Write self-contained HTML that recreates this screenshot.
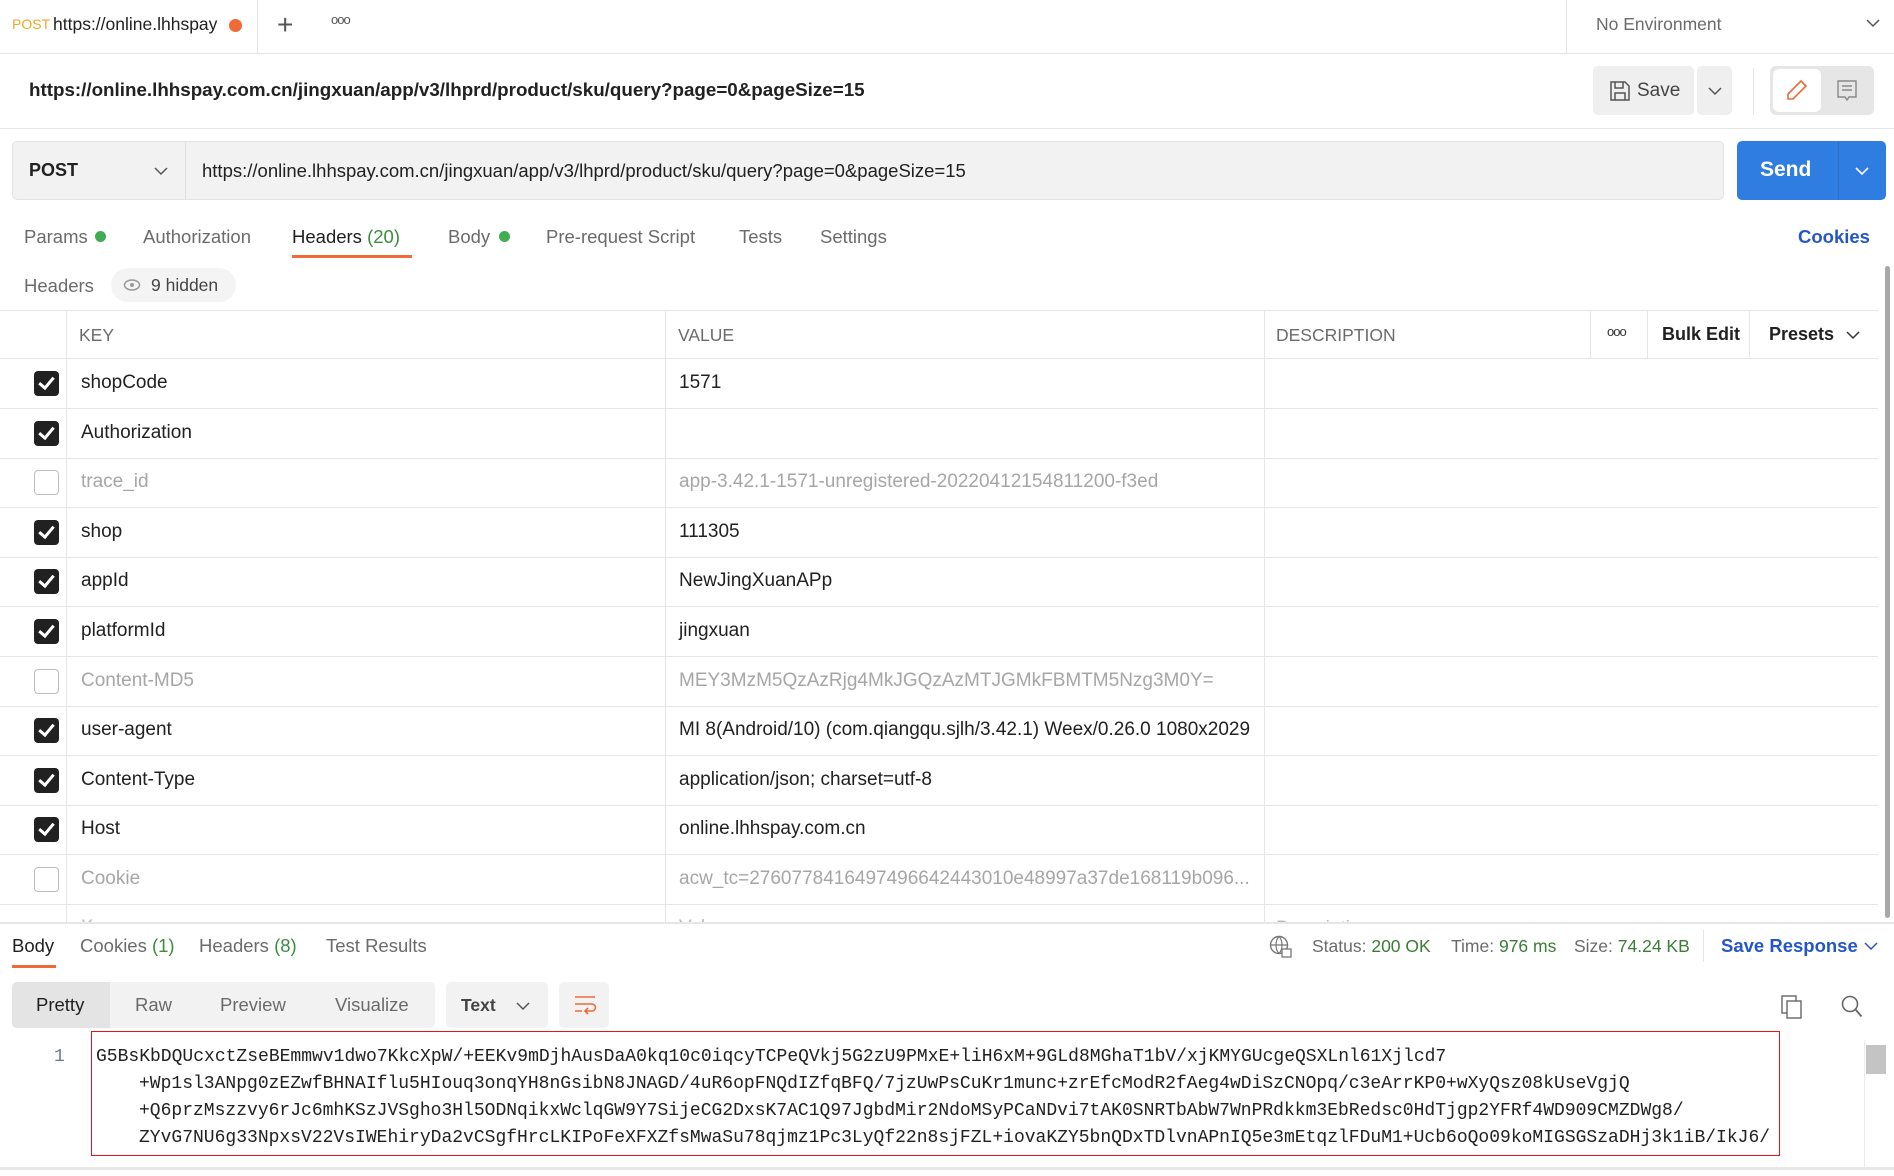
<!DOCTYPE html>
<html><head><meta charset="utf-8"><style>
*{box-sizing:border-box;margin:0;padding:0}
body{width:1894px;height:1176px;overflow:hidden;background:#fff;font-family:"Liberation Sans",sans-serif;color:#212121;position:relative}
.a{position:absolute;white-space:nowrap}
.g{color:#6b6b6b}
.hl{position:absolute;background:#e6e6e6;height:1px}
.vl{position:absolute;background:#e6e6e6;width:1px}
.cb{position:absolute;left:34px;width:25px;height:25px;border-radius:4px;background:#212121}
.cb::after{content:"";position:absolute;left:8px;top:3px;width:6px;height:12px;border:solid #fff;border-width:0 3px 3px 0;transform:rotate(40deg)}
.cb.off{background:#fff;border:1.5px solid #bdbdbd}
.cb.off::after{display:none}
.row{position:absolute;left:0;width:1878px;height:50px;border-bottom:1px solid #e6e6e6;font-size:19px}
.row .k{position:absolute;left:81px;top:13px}
.row .v{position:absolute;left:679px;top:13px}
.row.dis{color:#a6a6a6}
.mono{font-family:"Liberation Mono",monospace;font-size:18px;color:#212121}
.t{font-size:18.5px}
</style></head><body>

<div class="a" style="left:12px;top:16px;font-size:14px;color:#f5a623">POST</div>
<div class="a" style="left:53px;top:14px;font-size:17.5px">https://online.lhhspay</div>
<div class="a" style="left:229px;top:19px;width:13px;height:13px;border-radius:50%;background:#ee6a37"></div>
<div class="vl" style="left:257px;top:0;height:53px"></div>
<div class="a" style="left:277px;top:9px;font-size:28px;font-weight:300;color:#555">+</div>
<div class="a" style="left:331px;top:12px;font-size:13px;color:#555;letter-spacing:-1px">ooo</div>
<div class="vl" style="left:1566px;top:0;height:53px"></div>
<div class="a g" style="left:1596px;top:14px;font-size:17.5px">No Environment</div>
<svg class="a" style="left:1866px;top:18px" width="14" height="10"><path d="M1 2l6 6 6-6" fill="none" stroke="#555" stroke-width="1.5"/></svg>
<div class="hl" style="left:0;top:53px;width:1894px"></div>

<div class="a" style="left:29px;top:79px;font-size:18.8px;font-weight:bold">https://online.lhhspay.com.cn/jingxuan/app/v3/lhprd/product/sku/query?page=0&amp;pageSize=15</div>
<div class="a" style="left:1593px;top:66px;width:101px;height:49px;background:#efefef;border-radius:5px"></div>
<svg class="a" style="left:1609px;top:80px" width="22" height="22"><path d="M2 2h14l4 4v14H2z M6 2v6h8V2 M6 20v-7h10v7" fill="none" stroke="#555" stroke-width="1.5"/></svg>
<div class="a" style="left:1637px;top:80px;font-size:19px;color:#444">Save</div>
<div class="a" style="left:1697px;top:66px;width:35px;height:49px;background:#efefef;border-radius:5px"></div>
<svg class="a" style="left:1708px;top:86px" width="14" height="10"><path d="M1 2l6 6 6-6" fill="none" stroke="#555" stroke-width="1.5"/></svg>
<div class="vl" style="left:1753px;top:68px;height:47px"></div>
<div class="a" style="left:1770px;top:66px;width:104px;height:49px;background:#e6e6e6;border-radius:6px"></div>
<div class="a" style="left:1773px;top:69px;width:48px;height:43px;background:#fff;border-radius:6px"></div>
<svg class="a" style="left:1785px;top:78px" width="24" height="24"><path d="M16 3l5 5L8 21H3v-5z" fill="none" stroke="#ee6a37" stroke-width="1.6"/></svg>
<svg class="a" style="left:1836px;top:79px" width="22" height="24"><path d="M2 2h18v16h-7l-2 3-2-3H2z M6 7h10M6 11h10" fill="none" stroke="#888" stroke-width="1.4"/></svg>
<div class="hl" style="left:0;top:128px;width:1894px"></div>

<div class="a" style="left:12px;top:141px;width:1712px;height:59px;background:#f2f2f2;border:1px solid #e3e3e3;border-radius:5px"></div>
<div class="vl" style="left:185px;top:142px;height:57px;background:#e0e0e0"></div>
<div class="a" style="left:29px;top:160px;font-size:18px;font-weight:bold">POST</div>
<svg class="a" style="left:154px;top:166px" width="14" height="10"><path d="M1 2l6 6 6-6" fill="none" stroke="#555" stroke-width="1.5"/></svg>
<div class="a" style="left:202px;top:160px;font-size:18.5px">https://online.lhhspay.com.cn/jingxuan/app/v3/lhprd/product/sku/query?page=0&amp;pageSize=15</div>
<div class="a" style="left:1737px;top:141px;width:149px;height:59px;background:#2f7de1;border-radius:5px"></div>
<div class="vl" style="left:1838px;top:141px;height:59px;background:#2a6fc8"></div>
<div class="a" style="left:1760px;top:158px;font-size:21px;font-weight:bold;color:#fff">Send</div>
<svg class="a" style="left:1855px;top:166px" width="14" height="10"><path d="M1 2l6 6 6-6" fill="none" stroke="#fff" stroke-width="1.6"/></svg>

<div class="a g t" style="left:24px;top:226px">Params</div>
<div class="a" style="left:95px;top:231px;width:11px;height:11px;border-radius:50%;background:#3fae52"></div>
<div class="a g t" style="left:143px;top:226px">Authorization</div>
<div class="a t" style="left:292px;top:226px">Headers <span style="color:#3c8c3c">(20)</span></div>
<div class="a" style="left:292px;top:255px;width:120px;height:3px;background:#ee6a37"></div>
<div class="a g t" style="left:448px;top:226px">Body</div>
<div class="a" style="left:499px;top:231px;width:11px;height:11px;border-radius:50%;background:#3fae52"></div>
<div class="a g t" style="left:546px;top:226px">Pre-request Script</div>
<div class="a g t" style="left:739px;top:226px">Tests</div>
<div class="a g t" style="left:820px;top:226px">Settings</div>
<div class="a" style="left:1798px;top:226px;font-size:18.5px;font-weight:bold;color:#2556c9">Cookies</div>

<div class="a g t" style="left:24px;top:275px">Headers</div>
<div class="a" style="left:111px;top:268px;width:125px;height:34px;background:#f4f4f4;border-radius:17px"></div>
<svg class="a" style="left:123px;top:278px" width="18" height="14"><ellipse cx="9" cy="7" rx="7.5" ry="5" fill="none" stroke="#999" stroke-width="1.5"/><circle cx="9" cy="7" r="2" fill="#999"/></svg>
<div class="a" style="left:151px;top:275px;font-size:17.5px;color:#444">9 hidden</div>

<div class="a" style="left:0;top:310px;width:1878px;height:612px;overflow:hidden">
 <div class="hl" style="left:0;top:0;width:1878px"></div>
 <div class="a" style="left:0;top:0;width:1878px;height:49px;border-bottom:1px solid #e6e6e6"></div>
 <div class="a g" style="left:79px;top:15px;font-size:17.5px">KEY</div>
 <div class="a g" style="left:678px;top:15px;font-size:17.5px">VALUE</div>
 <div class="a g" style="left:1276px;top:15px;font-size:17.5px">DESCRIPTION</div>
 <div class="a" style="left:1607px;top:14px;font-size:13px;color:#333;letter-spacing:-1px">ooo</div>
 <div class="a" style="left:1662px;top:14px;font-size:18px;font-weight:bold">Bulk Edit</div>
 <div class="a" style="left:1769px;top:14px;font-size:18px;font-weight:bold">Presets</div>
 <svg class="a" style="left:1846px;top:20px" width="14" height="10"><path d="M1 2l6 6 6-6" fill="none" stroke="#333" stroke-width="1.5"/></svg>
 <div class="vl" style="left:1590px;top:0;height:49px"></div>
 <div class="vl" style="left:1647px;top:0;height:49px"></div>
 <div class="vl" style="left:1749px;top:0;height:49px"></div>
 <div class="vl" style="left:66px;top:0;height:620px"></div>
 <div class="vl" style="left:665px;top:0;height:620px"></div>
 <div class="vl" style="left:1264px;top:0;height:620px"></div>

 <div class="row" style="top:49px"><div class="cb" style="top:12px"></div><div class="k">shopCode</div><div class="v">1571</div></div>
 <div class="row" style="top:99px"><div class="cb" style="top:12px"></div><div class="k">Authorization</div><div class="v"></div></div>
 <div class="row dis" style="top:148px"><div class="cb off" style="top:12px"></div><div class="k">trace_id</div><div class="v">app-3.42.1-1571-unregistered-20220412154811200-f3ed</div></div>
 <div class="row" style="top:198px"><div class="cb" style="top:12px"></div><div class="k">shop</div><div class="v">111305</div></div>
 <div class="row" style="top:247px"><div class="cb" style="top:12px"></div><div class="k">appId</div><div class="v">NewJingXuanAPp</div></div>
 <div class="row" style="top:297px"><div class="cb" style="top:12px"></div><div class="k">platformId</div><div class="v">jingxuan</div></div>
 <div class="row dis" style="top:347px"><div class="cb off" style="top:12px"></div><div class="k">Content-MD5</div><div class="v">MEY3MzM5QzAzRjg4MkJGQzAzMTJGMkFBMTM5Nzg3M0Y=</div></div>
 <div class="row" style="top:396px"><div class="cb" style="top:12px"></div><div class="k">user-agent</div><div class="v">MI 8(Android/10) (com.qiangqu.sjlh/3.42.1) Weex/0.26.0 1080x2029</div></div>
 <div class="row" style="top:446px"><div class="cb" style="top:12px"></div><div class="k">Content-Type</div><div class="v">application/json; charset=utf-8</div></div>
 <div class="row" style="top:495px"><div class="cb" style="top:12px"></div><div class="k">Host</div><div class="v">online.lhhspay.com.cn</div></div>
 <div class="row dis" style="top:545px"><div class="cb off" style="top:12px"></div><div class="k">Cookie</div><div class="v">acw_tc=2760778416497496642443010e48997a37de168119b096...</div></div>
 <div class="row dis" style="top:594px;color:#bbb"><div class="k">Key</div><div class="v">Value</div><div class="a" style="left:1276px;top:14px">Description</div></div>
</div>
<div class="a" style="left:1885px;top:266px;width:5px;height:652px;background:#a8a8a8;border-radius:3px"></div>
<div class="hl" style="left:0;top:922px;width:1894px;height:2px"></div>

<div class="a t" style="left:12px;top:935px">Body</div>
<div class="a" style="left:12px;top:965px;width:44px;height:3px;background:#ee6a37"></div>
<div class="a g t" style="left:80px;top:935px">Cookies <span style="color:#3c8c3c">(1)</span></div>
<div class="a g t" style="left:199px;top:935px">Headers <span style="color:#3c8c3c">(8)</span></div>
<div class="a g t" style="left:326px;top:935px">Test Results</div>
<svg class="a" style="left:1269px;top:935px" width="24" height="24"><circle cx="10" cy="10" r="8.5" fill="none" stroke="#777" stroke-width="1.4"/><path d="M1.5 10h17M10 1.5c-4 4-4 13 0 17M10 1.5c4 4 4 13 0 17" fill="none" stroke="#777" stroke-width="1.2"/><rect x="13" y="14" width="9" height="8" fill="#fff" stroke="#777" stroke-width="1.3"/></svg>
<div class="a g" style="left:1312px;top:936px;font-size:17.5px">Status: <span style="color:#3a7d35">200 OK</span></div>
<div class="a g" style="left:1451px;top:936px;font-size:17.5px">Time: <span style="color:#3a7d35">976 ms</span></div>
<div class="a g" style="left:1574px;top:936px;font-size:17.5px">Size: <span style="color:#3a7d35">74.24 KB</span></div>
<div class="vl" style="left:1703px;top:930px;height:32px"></div>
<div class="a" style="left:1721px;top:935px;font-size:18.5px;font-weight:bold;color:#2556c9">Save Response</div>
<svg class="a" style="left:1864px;top:941px" width="14" height="10"><path d="M1 2l6 6 6-6" fill="none" stroke="#2556c9" stroke-width="1.5"/></svg>

<div class="a" style="left:12px;top:982px;width:423px;height:46px;background:#f2f2f2;border-radius:5px"></div>
<div class="a" style="left:12px;top:982px;width:98px;height:46px;background:#e4e4e4;border-radius:5px 0 0 5px"></div>
<div class="a t" style="left:36px;top:994px">Pretty</div>
<div class="a g t" style="left:135px;top:994px">Raw</div>
<div class="a g t" style="left:220px;top:994px">Preview</div>
<div class="a g t" style="left:335px;top:994px">Visualize</div>
<div class="a" style="left:446px;top:982px;width:102px;height:46px;background:#f2f2f2;border-radius:5px"></div>
<div class="a" style="left:461px;top:995px;font-size:17.5px;font-weight:bold;color:#444">Text</div>
<svg class="a" style="left:516px;top:1001px" width="14" height="10"><path d="M1 2l6 6 6-6" fill="none" stroke="#555" stroke-width="1.5"/></svg>
<div class="a" style="left:559px;top:982px;width:50px;height:46px;background:#f2f2f2;border-radius:5px"></div>
<svg class="a" style="left:573px;top:994px" width="24" height="24"><path d="M2 3h20M2 10h17a3.5 3.5 0 0 1 0 7h-6M15 14l-3 3 3 3M2 17h7" fill="none" stroke="#ee6a37" stroke-width="1.6"/></svg>
<svg class="a" style="left:1780px;top:994px" width="24" height="26"><rect x="2" y="2" width="14" height="17" fill="none" stroke="#666" stroke-width="1.4"/><rect x="7" y="7" width="14" height="17" fill="#fff" stroke="#666" stroke-width="1.4"/></svg>
<svg class="a" style="left:1840px;top:994px" width="24" height="26"><circle cx="10" cy="10" r="7.5" fill="none" stroke="#666" stroke-width="1.6"/><path d="M15.5 15.5l6 7" stroke="#666" stroke-width="1.8"/></svg>

<div class="a" style="left:91px;top:1031px;width:1689px;height:125px;border:1.5px solid #e6141a"></div>
<div class="a" style="left:54px;top:1047px;font-size:18px;color:#6b7a8a;font-family:'Liberation Mono',monospace">1</div>
<div class="a mono" style="left:96px;top:1047px">G5BsKbDQUcxctZseBEmmwv1dwo7KkcXpW/+EEKv9mDjhAusDaA0kq10c0iqcyTCPeQVkj5G2zU9PMxE+liH6xM+9GLd8MGhaT1bV/xjKMYGUcgeQSXLnl61Xjlcd7</div>
<div class="a mono" style="left:139px;top:1074px">+Wp1sl3ANpg0zEZwfBHNAIflu5HIouq3onqYH8nGsibN8JNAGD/4uR6opFNQdIZfqBFQ/7jzUwPsCuKr1munc+zrEfcModR2fAeg4wDiSzCNOpq/c3eArrKP0+wXyQsz08kUseVgjQ</div>
<div class="a mono" style="left:139px;top:1101px">+Q6przMszzvy6rJc6mhKSzJVSgho3Hl5ODNqikxWclqGW9Y7SijeCG2DxsK7AC1Q97JgbdMir2NdoMSyPCaNDvi7tAK0SNRTbAbW7WnPRdkkm3EbRedsc0HdTjgp2YFRf4WD909CMZDWg8/</div>
<div class="a mono" style="left:139px;top:1128px">ZYvG7NU6g33NpxsV22VsIWEhiryDa2vCSgfHrcLKIPoFeXFXZfsMwaSu78qjmz1Pc3LyQf22n8sjFZL+iovaKZY5bnQDxTDlvnAPnIQ5e3mEtqzlFDuM1+Ucb6oQo09koMIGSGSzaDHj3k1iB/IkJ6/</div>
<div class="a" style="left:1866px;top:1045px;width:20px;height:29px;background:#c4c4c4"></div>
<div class="vl" style="left:1864px;top:1040px;height:128px;background:#ececec"></div>
<div class="hl" style="left:0;top:1167px;width:1894px;height:3px;background:#e8e8e8"></div>
</body></html>
